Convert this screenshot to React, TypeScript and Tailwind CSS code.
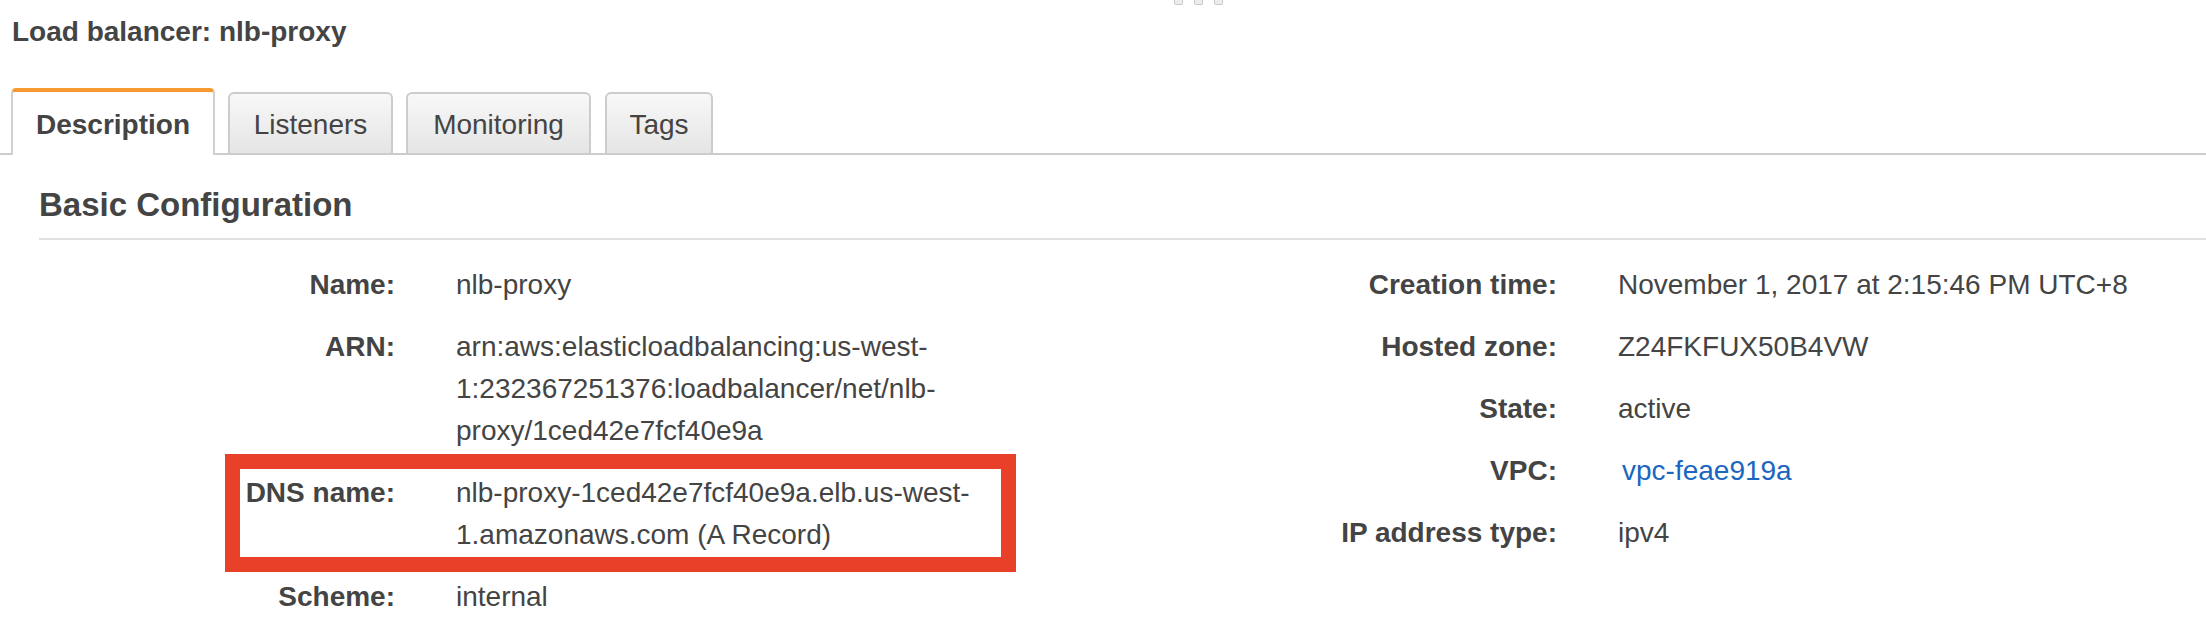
import React from "react";

type Row = { label: string; lines: string[]; link?: boolean; boxed?: boolean };

const leftRows: Row[] = [
  { label: "Name:", lines: ["nlb-proxy"] },
  {
    label: "ARN:",
    lines: [
      "arn:aws:elasticloadbalancing:us-west-",
      "1:232367251376:loadbalancer/net/nlb-",
      "proxy/1ced42e7fcf40e9a",
    ],
  },
  {
    label: "DNS name:",
    lines: ["nlb-proxy-1ced42e7fcf40e9a.elb.us-west-", "1.amazonaws.com (A Record)"],
    boxed: true,
  },
  { label: "Scheme:", lines: ["internal"] },
];

const rightRows: Row[] = [
  { label: "Creation time:", lines: ["November 1, 2017 at 2:15:46 PM UTC+8"] },
  { label: "Hosted zone:", lines: ["Z24FKFUX50B4VW"] },
  { label: "State:", lines: ["active"] },
  { label: "VPC:", lines: ["vpc-feae919a"], link: true },
  { label: "IP address type:", lines: ["ipv4"] },
];

function DetailRow({ row }: { row: Row }) {
  return (
    <div className="relative grid grid-cols-[356px_1fr] gap-x-[61px] py-[10px]">
      {row.boxed && (
        <div className="pointer-events-none absolute left-[186px] top-[-8px] h-[118px] w-[791px] border-[15px] border-[#e9402a]" />
      )}
      <div className="text-right font-bold leading-[42px] whitespace-nowrap">{row.label}</div>
      <div className="leading-[42px] whitespace-nowrap">
        {row.lines.map((l, i) =>
          row.link ? (
            <div key={i} className="ml-[4px] text-[#1a66c0]">
              {l}
            </div>
          ) : (
            <div key={i}>{l}</div>
          )
        )}
      </div>
    </div>
  );
}

export default function App() {
  return (
    <div
      className="relative h-[638px] w-[2206px] overflow-hidden bg-white text-[28px] text-[#444]"
      style={{ fontFamily: '"Liberation Sans", Arial, Helvetica, sans-serif' }}
    >
      {/* drag handle */}
      <div className="absolute left-[1174px] top-0 flex gap-[11px]">
        <div className="h-[5px] w-[9px] rounded-b-[2px] border border-t-0 border-[#c9c9c9] bg-[#ececec]" />
        <div className="h-[5px] w-[9px] rounded-b-[2px] border border-t-0 border-[#c9c9c9] bg-[#ececec]" />
        <div className="h-[5px] w-[9px] rounded-b-[2px] border border-t-0 border-[#c9c9c9] bg-[#ececec]" />
      </div>

      {/* title */}
      <div className="pl-[12px] pt-[11px] font-bold leading-[42px]">Load balancer: nlb-proxy</div>

      {/* tabs */}
      <div className="mt-[35px] flex h-[67px] items-end border-b-2 border-[#cccccc] pl-[11px]">
        <div className="-mb-[2px] h-[67px] w-[204px] rounded-t-[5px] border-x-2 border-t-4 border-x-[#d0d0d0] border-t-[#f69b32] bg-white pt-[12px] text-center font-bold leading-[42px]">
          Description
        </div>
        <div className="ml-[13px] h-[61px] w-[165px] rounded-t-[6px] border-x-2 border-t-2 border-[#cccccc] bg-gradient-to-b from-[#f8f8f8] to-[#e5e5e5] pt-[10px] text-center leading-[42px]">
          Listeners
        </div>
        <div className="ml-[13px] h-[61px] w-[185px] rounded-t-[6px] border-x-2 border-t-2 border-[#cccccc] bg-gradient-to-b from-[#f8f8f8] to-[#e5e5e5] pt-[10px] text-center leading-[42px]">
          Monitoring
        </div>
        <div className="ml-[14px] h-[61px] w-[108px] rounded-t-[6px] border-x-2 border-t-2 border-[#cccccc] bg-gradient-to-b from-[#f8f8f8] to-[#e5e5e5] pt-[10px] text-center leading-[42px]">
          Tags
        </div>
      </div>

      {/* content */}
      <div className="pl-[39px]">
        <div className="border-b-2 border-[#e0e0e0] pb-[13px] pt-[30px] text-[33px] font-bold leading-[40px]">
          Basic Configuration
        </div>
        <div className="mt-[14px] flex">
          <div className="w-[1162px] flex-none">
            {leftRows.map((r) => (
              <DetailRow key={r.label} row={r} />
            ))}
          </div>
          <div className="flex-1">
            {rightRows.map((r) => (
              <DetailRow key={r.label} row={r} />
            ))}
          </div>
        </div>
      </div>
    </div>
  );
}
